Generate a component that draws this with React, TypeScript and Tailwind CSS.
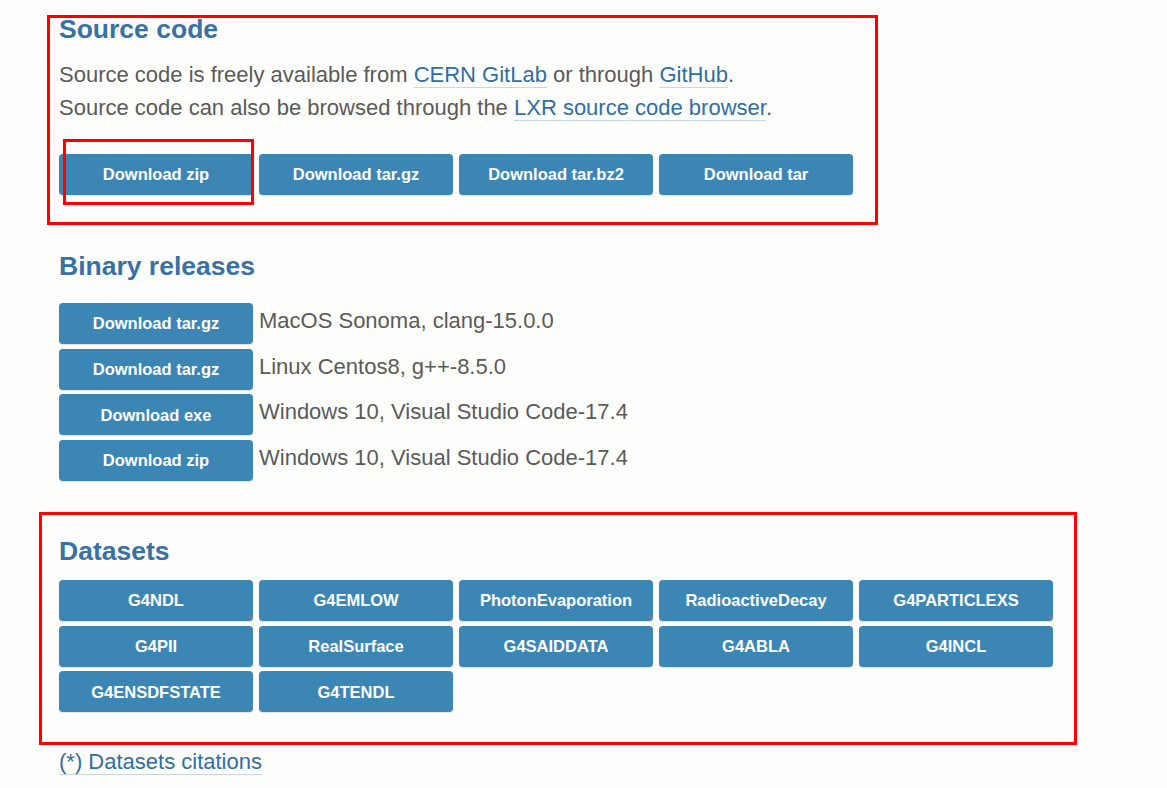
import React from "react";

const FONT = { fontFamily: '"Liberation Sans", Arial, sans-serif' };

const btn =
  "flex h-[41px] w-[194px] shrink-0 items-center justify-center rounded-[4px] bg-[#3b86b5] text-[16.5px] font-bold text-white shadow-[0_1px_1px_rgba(0,0,0,0.12)]";

const link = "text-[#2f6ea5] border-b border-[#c9d6e3]";

const datasets = [
  "G4NDL",
  "G4EMLOW",
  "PhotonEvaporation",
  "RadioactiveDecay",
  "G4PARTICLEXS",
  "G4PII",
  "RealSurface",
  "G4SAIDDATA",
  "G4ABLA",
  "G4INCL",
  "G4ENSDFSTATE",
  "G4TENDL",
];

const binaries = [
  ["Download tar.gz", "MacOS Sonoma, clang-15.0.0"],
  ["Download tar.gz", "Linux Centos8, g++-8.5.0"],
  ["Download exe", "Windows 10, Visual Studio Code-17.4"],
  ["Download zip", "Windows 10, Visual Studio Code-17.4"],
];

export default function App() {
  return (
    <div className="relative h-[788px] w-[1167px] overflow-hidden bg-[#fefefc]" style={FONT}>
      <div className="pl-[59px] pt-[14px]">
        {/* Source code */}
        <h2 className="text-[26.5px] font-bold leading-[30px] text-[#3871a4]">Source code</h2>
        <div className="mt-[14px] text-[22px] leading-[33px] text-[#5a5a5a]">
          <p>
            Source code is freely available from <a className={link}>CERN GitLab</a> or through{" "}
            <a className={link}>GitHub</a>.
          </p>
          <p>
            Source code can also be browsed through the <a className={link}>LXR source code browser</a>.
          </p>
        </div>
        <div className="mt-[30px] flex gap-[6px]">
          <div className={btn}>Download zip</div>
          <div className={btn}>Download tar.gz</div>
          <div className={btn}>Download tar.bz2</div>
          <div className={btn}>Download tar</div>
        </div>

        {/* Binary releases */}
        <h2 className="mt-[56px] text-[26.5px] font-bold leading-[30px] text-[#3871a4]">Binary releases</h2>
        <div className="mt-[22px] flex flex-col gap-[4.7px]">
          {binaries.map(([b, t], i) => (
            <div key={i} className="flex items-start gap-[6px]">
              <div className={btn}>{b}</div>
              <span className="mt-px text-[22px] leading-[33px] text-[#5a5a5a]">{t}</span>
            </div>
          ))}
        </div>

        {/* Datasets */}
        <h2 className="mt-[55px] text-[26.5px] font-bold leading-[30px] text-[#3871a4]">Datasets</h2>
        <div className="mt-[14px] grid w-[994px] grid-cols-5 gap-x-[6px] gap-y-[4.7px]">
          {datasets.map((d) => (
            <div key={d} className={btn}>
              {d}
            </div>
          ))}
        </div>
        <p className="mt-[33px] text-[22px] leading-[33px]">
          <a className={link}>(*) Datasets citations</a>
        </p>
      </div>

      {/* red annotation boxes */}
      <div className="pointer-events-none absolute left-[47px] top-[15px] h-[210px] w-[831px] border-[3px] border-[#ff0000]" />
      <div className="pointer-events-none absolute left-[63px] top-[139px] h-[66px] w-[191px] border-[3px] border-[#ff0000]" />
      <div className="pointer-events-none absolute left-[39px] top-[512px] h-[233px] w-[1038px] border-[3px] border-[#ff0000]" />
    </div>
  );
}
